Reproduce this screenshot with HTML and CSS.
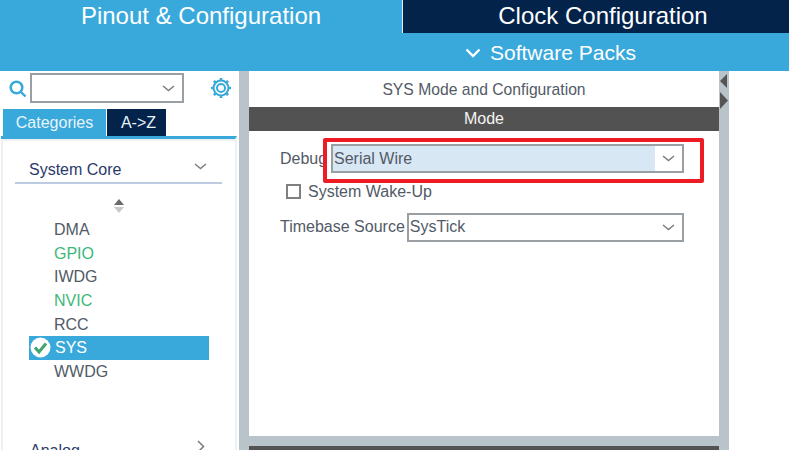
FILE: index.html
```html
<!DOCTYPE html>
<html lang="en">
<head>
<meta charset="utf-8">
<title>SYS Mode and Configuration</title>
<link rel="stylesheet" href="styles.css">
</head>
<body>
<div class="app">
  <header class="top">
    <div class="tabs">
      <div class="tab tab-active">Pinout &amp; Configuration</div>
      <div class="tab tab-dark">Clock Configuration</div>
    </div>
    <div class="packs">
      <svg class="packs-icon" width="16" height="10" viewBox="0 0 16 10"><path d="M1.500 1.500 8 8l6.500-6.500" fill="none" stroke="#fff" stroke-width="2.400"/></svg>
      <span>Software Packs</span>
    </div>
  </header>
  <main class="main">
    <aside class="side">
      <div class="search">
        <svg class="search-icon" width="18" height="18" viewBox="0 0 18 18"><circle cx="7.500" cy="7.500" r="5.800" fill="none" stroke="#39a9dc" stroke-width="2.600"/><path d="M11.500 11.500 16.500 16.500" stroke="#39a9dc" stroke-width="2.400"/></svg>
        <div class="search-box">
          <svg class="chev" width="13" height="7" viewBox="0 0 13 7"><path d="M1 1 6.500 5.500 12 1" fill="none" stroke="#7d7d7d" stroke-width="1.500"/></svg>
        </div>
        <svg class="gear" width="22" height="22" viewBox="0 0 22 22">
          <circle cx="11" cy="11" r="7.400" fill="none" stroke="#39a9dc" stroke-width="2"/>
          <circle cx="11" cy="11" r="4" fill="none" stroke="#39a9dc" stroke-width="2"/>
          <path d="M11 1v3M11 18v3M1 11h3M18 11h3M3.900 3.900 6 6M16 16l2.100 2.100M18.100 3.900 16 6M6 16l-2.100 2.100" stroke="#39a9dc" stroke-width="2.600"/>
        </svg>
      </div>
      <div class="side-tabs">
        <div class="side-tab side-tab-on">Categories</div>
        <div class="side-tab side-tab-off">A-&gt;Z</div>
      </div>
      <div class="side-panel">
        <div class="group">
          <span>System Core</span>
          <svg width="13" height="7" viewBox="0 0 13 7"><path d="M1 1 6.500 5.500 12 1" fill="none" stroke="#7d7d7d" stroke-width="1.500"/></svg>
        </div>
        <svg class="sort" width="12" height="14" viewBox="0 0 12 14"><path d="M6 0 11 6H1Z" fill="#6a6a6a"/><path d="M1 8H11L6 14Z" fill="#c8c8c8"/></svg>
        <ul class="list">
          <li class="item">DMA</li>
          <li class="item item-green">GPIO</li>
          <li class="item">IWDG</li>
          <li class="item item-green">NVIC</li>
          <li class="item">RCC</li>
          <li class="item item-sel">
            <svg class="check" width="21" height="21" viewBox="0 0 21 21"><circle cx="10.500" cy="10.500" r="10" fill="#fff"/><path d="M5 10.500 9 15l7-8.500" fill="none" stroke="#3fa66a" stroke-width="3"/></svg>
            SYS
          </li>
          <li class="item">WWDG</li>
        </ul>
        <div class="group group-closed">
          <span>Analog</span>
          <svg width="8" height="13" viewBox="0 0 8 13"><path d="M1 1 6.500 6.500 1 12" fill="none" stroke="#7d7d7d" stroke-width="1.500"/></svg>
        </div>
      </div>
    </aside>
    <div class="split"></div>
    <section class="center">
      <div class="panel">
        <h1 class="title">SYS Mode and Configuration</h1>
        <div class="bar">Mode</div>
        <div class="form">
          <div class="row row-debug">
            <span class="label label-debug">Debug</span>
            <div class="select select-on"><span class="value">Serial Wire</span><span class="arrow"><svg width="13" height="7" viewBox="0 0 13 7"><path d="M1 1 6.500 5.500 12 1" fill="none" stroke="#7d7d7d" stroke-width="1.500"/></svg></span></div>
            <div class="highlight"></div>
          </div>
          <label class="row-check"><span class="box"></span>System Wake-Up</label>
          <div class="row">
            <span class="label">Timebase Source</span>
            <div class="select select-tb"><span class="value">SysTick</span><span class="arrow"><svg width="13" height="7" viewBox="0 0 13 7"><path d="M1 1 6.500 5.500 12 1" fill="none" stroke="#7d7d7d" stroke-width="1.500"/></svg></span></div>
          </div>
        </div>
      </div>
      <div class="hsplit"></div>
      <div class="bar bar-bottom"></div>
    </section>
    <div class="split split-right">
      <svg class="arrows" width="10" height="38" viewBox="0 0 10 38"><path d="M8 2V16L1 9Z" fill="#555"/><path d="M1 20V37L9 28.500Z" fill="#555"/></svg>
    </div>
    <div class="rest"></div>
  </main>
</div>
</body>
</html>
```
FILE: styles.css
```css
* { box-sizing: border-box; }
html, body { margin: 0; padding: 0; background: #fff; }
body { font-family: "Liberation Sans", Arial, sans-serif; color: #525a66; overflow: hidden; }
.app { width: 789px; height: 450px; overflow: hidden; display: flex; flex-direction: column; }

.top { background: #39a9dc; color: #fff; height: 71px; flex: none; }
.tabs { display: flex; height: 33px; }
.tab { display: flex; align-items: center; justify-content: center; font-size: 24px; padding-bottom: 1px; }
.tab-active { width: 403px; border-right: 1px solid #e8eef2; }
.tab-dark { flex: 1; background: #03234b; padding-left: 14px; }
.packs { height: 38px; display: flex; align-items: center; padding-left: 465px; gap: 9px; font-size: 21px; padding-top: 1px; }

.main { flex: 1; display: flex; min-height: 0; }
.side { width: 239px; flex: none; display: flex; flex-direction: column; overflow: hidden; }
.search { height: 38px; flex: none; display: flex; align-items: flex-start; padding: 2px 0 0 9px; }
.search-icon { margin-top: 7px; }
.search-box { width: 154px; height: 30px; margin-left: 3px; border: 2px solid #9a9fa3; display: flex; align-items: center; justify-content: flex-end; padding-right: 7px; }
.gear { margin: 4px 0 0 26px; }
.side-tabs { display: flex; height: 27px; flex: none; padding-left: 3px; gap: 1px; }
.side-tab { display: flex; align-items: center; justify-content: center; font-size: 16px; color: #e8f4fa; }
.side-tab-on { width: 103px; background: #39a9dc; }
.side-tab-off { width: 59px; background: #03234b; padding-left: 4px; }
.side-panel { flex: 1; margin: 0 2px 0 1px; border-top: 3px solid #39a9dc; padding: 0 0 0 1px; position: relative; box-shadow: inset 2px 2px 0 #eef0f1; background: #fff; border-right: 2px solid #eef0f1; min-height: 0; }
.group { margin: 18px 13px 0 13px; height: 27px; border-bottom: 2px solid #bccbe0; color: #2c3a6b; font-size: 16px; display: flex; justify-content: space-between; align-items: flex-start; padding: 4px 15px 0 14px; }
.group svg { margin-top: 2px; }
.sort { display: block; margin: 15px 0 0 111px; }
.list { list-style: none; margin: 5px 0 0 27px; padding: 0; width: 180px; }
.item { height: 23.700px; padding-left: 25px; font-size: 16px; line-height: 24px; color: #525a66; display: flex; align-items: center; position: relative; }
.item-green { color: #3cb878; }
.item-sel { background: #39a9dc; color: #fff; padding-left: 26px; }
.check { position: absolute; left: 1px; top: 1px; }
.group-closed { border: 0; margin-top: 54px; padding-left: 15px; padding-right: 17px; }
.group-closed svg { margin-top: -2px; }

.split { width: 10px; flex: none; background: #b8c4ca; }
.split-right { position: relative; }
.arrows { position: absolute; left: 0; top: 1px; }
.rest { flex: 1; background: #fff; }
.center { width: 470px; flex: none; display: flex; flex-direction: column; }
.panel { height: 365px; flex: none; display: flex; flex-direction: column; }
.title { margin: 0; height: 36px; display: flex; align-items: center; justify-content: center; font-size: 15.700px; font-weight: normal; color: #525a66; padding-top: 1px; }
.bar { height: 24px; background: #525252; color: #f4f4f4; font-size: 16px; display: flex; align-items: center; justify-content: center; flex: none; }
.form { padding: 12px 0 0 31px; display: flex; flex-direction: column; }
.row { display: flex; align-items: center; height: 30px; font-size: 16px; position: relative; }
.label-debug { width: 51px; }
.label { flex: none; }
.select { height: 30px; border: 2px solid #9a9fa3; display: flex; align-items: stretch; background: #fff; }
.row-debug { margin-top: 1px; height: 29px; }
.select-on { width: 353px; height: 29px; }
.select-on .value { background: #d8e7f4; }
.select-tb { width: 277px; margin-left: 2px; height: 29px; }
.value { flex: 1; padding-left: 1px; display: flex; align-items: center; }
.arrow { width: 27px; display: flex; align-items: center; justify-content: center; }
.highlight { position: absolute; left: 43px; top: -6px; width: 381px; height: 45px; border: 4px solid #ed1c24; border-radius: 2px; pointer-events: none; }
.row-check { display: flex; align-items: center; height: 25px; margin: 6px 0 8px 6px; font-size: 16px; }
.box { width: 15px; height: 15px; border: 2px solid #808080; margin-right: 7px; background: #fff; }
.hsplit { height: 10px; flex: none; background: #b8c4ca; }
.bar-bottom { flex: 1; height: auto; }
```
